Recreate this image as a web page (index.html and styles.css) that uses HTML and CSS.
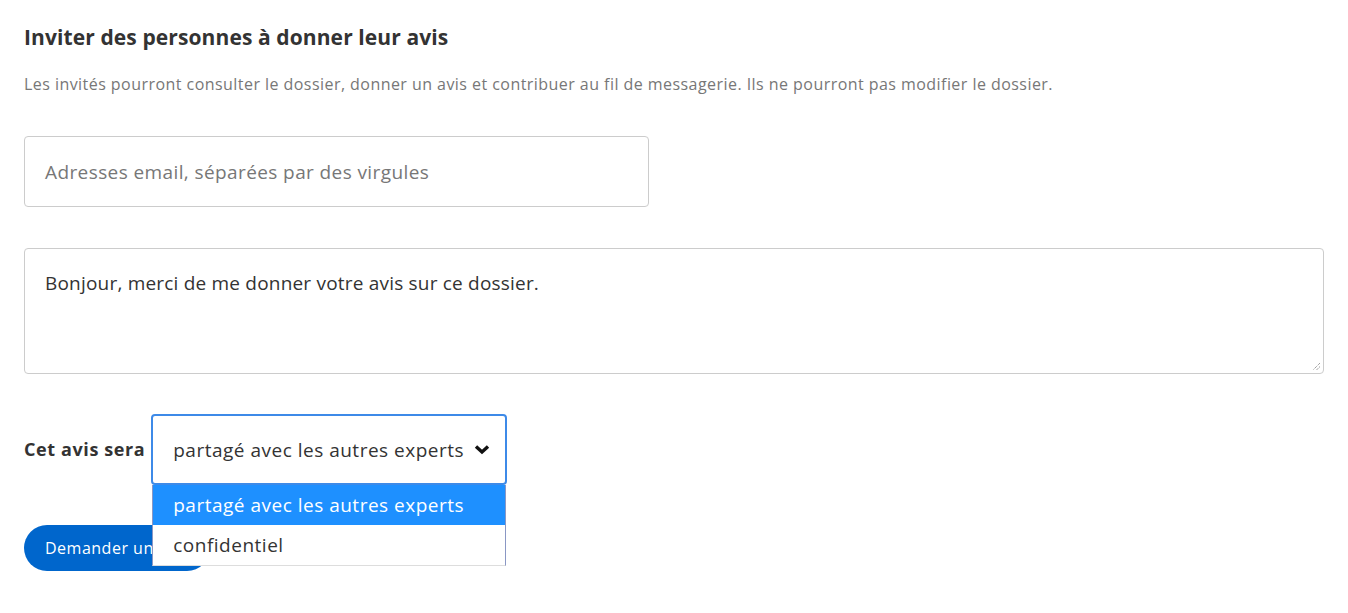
FILE: index.html
```html
<!DOCTYPE html>
<html lang="fr">
<head>
<meta charset="utf-8">
<title>Inviter</title>
<link rel="stylesheet" href="styles.css">
</head>
<body>
<main class="page">
  <h2 class="title">Inviter des personnes à donner leur avis</h2>
  <p class="desc">Les invités pourront consulter le dossier, donner un avis et contribuer au fil de messagerie. Ils ne pourront pas modifier le dossier.</p>
  <div class="email">Adresses email, séparées par des virgules</div>
  <div class="message">
    <span>Bonjour, merci de me donner votre avis sur ce dossier.</span>
    <svg class="grip" width="10" height="10" viewBox="0 0 10 10"><path d="M9 2 L2 9 M9 5.5 L5.5 9" stroke="#777" stroke-width="1" stroke-dasharray="1 1"/></svg>
  </div>
  <div class="row">
    <span class="label">Cet avis sera</span>
    <div class="select-wrap">
      <div class="select">
        <span>partagé avec les autres experts</span>
        <svg class="chev" width="16" height="11" viewBox="0 0 16 11"><path d="M2 2.5 L8 8 L14 2.5" fill="none" stroke="#111" stroke-width="3.4"/></svg>
      </div>
      <ul class="options">
        <li class="opt active">partagé avec les autres experts</li>
        <li class="opt">confidentiel</li>
      </ul>
    </div>
  </div>
  <button class="btn">Demander un avis</button>
</main>
</body>
</html>
```
FILE: styles.css
```css
* { box-sizing: border-box; }
body {
  margin: 0;
  background: #fff;
  font-family: "Open Sans", "Lato", sans-serif;
  color: #333;
}
.page {
  padding: 24px 24px 0 24px;
  display: flex;
  flex-direction: column;
}
.title {
  margin: 0;
  font-size: 21px;
  font-weight: 700;
  line-height: 26px;
  letter-spacing: 0.1px;
  color: #333;
}
.desc {
  margin: 23px 0 0 0;
  font-size: 16px;
  line-height: 22px;
  letter-spacing: 0.45px;
  color: #777;
}
.email {
  margin-top: 41px;
  width: 625px;
  height: 71px;
  border: 1px solid #ccc;
  border-radius: 4px;
  padding: 0 20px;
  display: flex;
  align-items: center;
  font-size: 19px;
  letter-spacing: 0.4px;
  color: #777;
}
.message {
  position: relative;
  margin-top: 41px;
  height: 126px;
  border: 1px solid #ccc;
  border-radius: 4px;
  padding: 21px 20px;
  font-size: 19px;
  line-height: 26px;
  letter-spacing: 0.2px;
  color: #333;
}
.grip {
  position: absolute;
  right: 2px;
  bottom: 2px;
}
.row {
  margin-top: 40px;
  display: flex;
  align-items: center;
  gap: 6px;
}
.label {
  font-size: 18px;
  font-weight: 700;
  letter-spacing: 0.6px;
  line-height: 22px;
  margin-top: -2px;
  color: #333;
}
.select-wrap {
  position: relative;
}
.select {
  width: 356px;
  height: 71px;
  border: 2px solid #3d8ae8;
  border-radius: 4px;
  padding: 0 15px 0 20px;
  display: flex;
  align-items: center;
  justify-content: space-between;
  font-size: 19px;
  letter-spacing: 0.5px;
  color: #333;
}
.options {
  position: absolute;
  left: 1px;
  top: 71px;
  width: 354px;
  margin: 0;
  padding: 0;
  list-style: none;
  background: #fff;
  border-left: 1px solid #8a97c4;
  border-right: 1px solid #8a97c4;
  border-bottom: 1px solid #ddd;
  z-index: 2;
}
.opt {
  height: 40px;
  padding: 0 20px;
  display: flex;
  align-items: center;
  font-size: 19px;
  letter-spacing: 0.5px;
  color: #333;
}
.opt.active {
  background: #1e90ff;
  color: #fff;
}
.btn {
  margin-top: 40px;
  align-self: flex-start;
  height: 46px;
  padding: 0 21px;
  border: none;
  border-radius: 23px;
  background: #0066cc;
  color: #fff;
  font-family: inherit;
  font-size: 16px;
  letter-spacing: 0.5px;
}
```
